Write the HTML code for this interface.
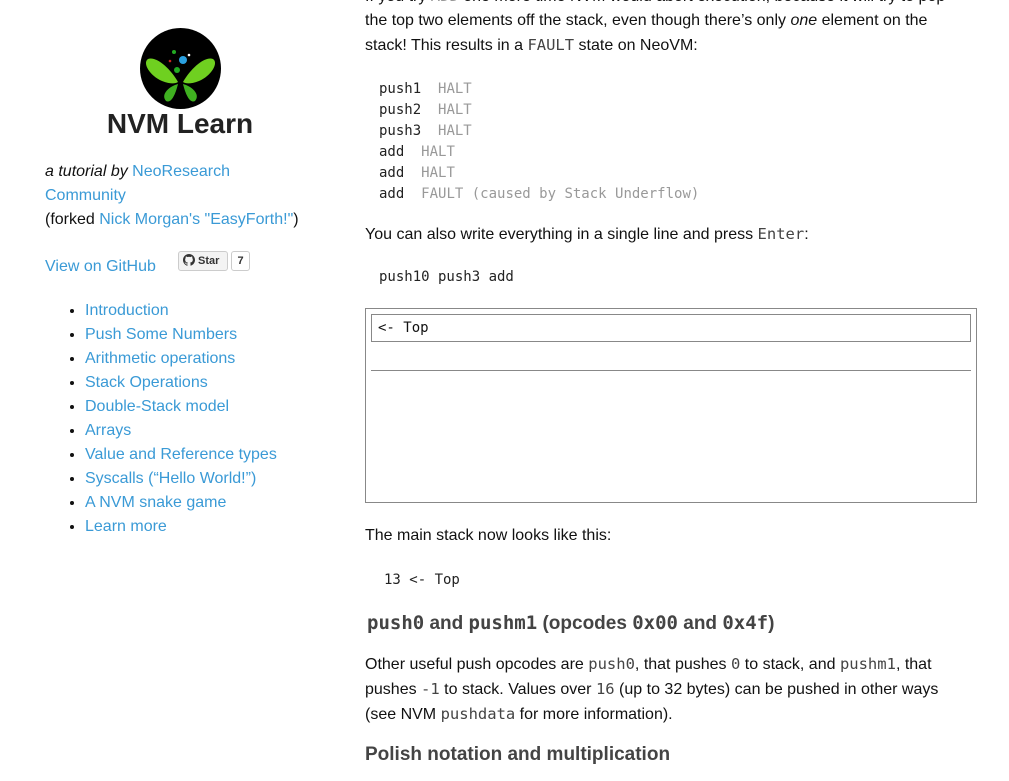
<!DOCTYPE html>
<html><head><meta charset="utf-8"><style>
body{margin:0;width:1009px;height:781px;overflow:hidden;background:#fff;font-family:"Liberation Sans",sans-serif;font-size:16px;color:#111;position:relative}
a{color:#3a9ad6;text-decoration:none}
.abs{position:absolute}
code,.m{font-family:"DejaVu Sans Mono","Liberation Mono",monospace;font-size:14px;color:#333}
p code{font-size:15.5px;color:#444}
p{margin:0;line-height:24px}
.g{color:#999}
ul{margin:0;padding-left:40px;line-height:24px}
h3{margin:0;font-size:19px;color:#444}
</style></head><body>
<div class="abs" style="left:140px;top:28px;width:81px;height:81px">
<svg width="81" height="81" viewBox="0 0 81 81"><circle cx="40.5" cy="40.5" r="40.5" fill="#000"/>
<path d="M38 54 C30 40 16 28 8 31 C2 35 10 48 22 53 C30 56 35 56 38 54Z" fill="#6fd020"/>
<path d="M43 54 C51 40 65 28 73 31 C79 35 71 48 59 53 C51 56 46 56 43 54Z" fill="#6fd020"/>
<path d="M38 56 C30 58 20 66 26 73 C32 76 36 64 38 56Z" fill="#3fb020"/>
<path d="M43 56 C51 58 61 66 55 73 C49 76 45 64 43 56Z" fill="#3fb020"/>
<circle cx="43" cy="32" r="4" fill="#2aa0e0"/><circle cx="34" cy="24" r="2" fill="#2a2"/><circle cx="30" cy="33" r="1.3" fill="#c22"/><circle cx="49" cy="27" r="1.3" fill="#fff"/><circle cx="37" cy="42" r="3" fill="#2a2"/></svg></div>
<div class="abs" style="left:0;width:360px;top:108px;text-align:center;font-weight:bold;font-size:28px;color:#222">NVM Learn</div>
<div class="abs" style="left:45px;top:160px;width:270px;line-height:24px"><i>a tutorial by</i> <a>NeoResearch Community</a><br>(forked <a>Nick Morgan's "EasyForth!"</a>)</div>
<div class="abs" style="left:45px;top:255px;line-height:24px"><a>View on GitHub</a></div>
<div class="abs" style="left:178px;top:251px;height:20px;border:1px solid #ccc;border-radius:3px;background:#f3f3f3;font-size:11px;font-weight:bold;color:#333;line-height:18px;padding:0 5px 0 4px;box-sizing:border-box;width:50px"><svg width="12" height="12" viewBox="0 0 16 16" style="vertical-align:-2px"><path fill="#333" d="M8 0C3.6 0 0 3.6 0 8c0 3.5 2.3 6.5 5.5 7.6.4.1.5-.2.5-.4v-1.4c-2.2.5-2.7-1-2.7-1-.4-.9-.9-1.2-.9-1.2-.7-.5.1-.5.1-.5.8.1 1.2.8 1.2.8.7 1.2 1.9.9 2.3.7.1-.5.3-.9.5-1.1-1.8-.2-3.6-.9-3.6-4 0-.9.3-1.6.8-2.1-.1-.2-.4-1 .1-2.1 0 0 .7-.2 2.2.8.6-.2 1.3-.3 2-.3s1.4.1 2 .3c1.5-1 2.2-.8 2.2-.8.4 1.1.2 1.9.1 2.1.5.6.8 1.3.8 2.1 0 3.1-1.9 3.7-3.6 3.9.3.3.5.8.5 1.5v2.2c0 .2.1.5.6.4C13.7 14.5 16 11.5 16 8c0-4.4-3.6-8-8-8z"/></svg> Star</div>
<div class="abs" style="left:231px;top:251px;height:20px;width:19px;border:1px solid #ccc;border-radius:3px;box-sizing:border-box;font-size:11px;font-weight:bold;color:#333;line-height:18px;text-align:center">7</div>
<ul class="abs" style="left:45px;top:299px;padding-left:40px">
<li><a>Introduction</a></li><li><a>Push Some Numbers</a></li><li><a>Arithmetic operations</a></li><li><a>Stack Operations</a></li><li><a>Double-Stack model</a></li><li><a>Arrays</a></li><li><a>Value and Reference types</a></li><li><a>Syscalls (“Hello World!”)</a></li><li><a>A NVM snake game</a></li><li><a>Learn more</a></li></ul>
<div class="abs" style="left:365px;top:-16px;width:590px">
<p>If you try <code class="g">ADD</code> one more time NVM would abort execution, because it will try to pop the top two elements off the stack, even though there’s only <i>one</i> element on the stack! This results in a <code>FAULT</code> state on NeoVM:</p></div>
<div class="abs m" style="left:379px;top:79px;line-height:21px;color:#222">push1 &nbsp;<span class="g">HALT</span><br>push2 &nbsp;<span class="g">HALT</span><br>push3 &nbsp;<span class="g">HALT</span><br>add &nbsp;<span class="g">HALT</span><br>add &nbsp;<span class="g">HALT</span><br>add &nbsp;<span class="g">FAULT (caused by Stack Underflow)</span></div>
<div class="abs" style="left:365px;top:222px"><p>You can also write everything in a single line and press <code>Enter</code>:</p></div>
<div class="abs m" style="left:379px;top:269px;color:#222">push10 push3 add</div>
<div class="abs" style="left:365px;top:308px;width:610px;height:193px;border:1px solid #888"></div>
<div class="abs m" style="left:371px;top:314px;height:26px;border:1px solid #888;line-height:27px;color:#111;padding-left:6px;width:592px">&lt;- Top</div>
<div class="abs" style="left:371px;top:370px;width:600px;height:1px;background:#888"></div>
<div class="abs" style="left:365px;top:524px"><p>The main stack now looks like this:</p></div>
<div class="abs m" style="left:384px;top:572px;color:#222">13 &lt;- Top</div>
<h3 class="abs" style="left:367px;top:612px"><code style="font-size:19px;color:#444">push0</code> and <code style="font-size:19px;color:#444">pushm1</code> (opcodes <code style="font-size:19px;color:#444">0x00</code> and <code style="font-size:19px;color:#444">0x4f</code>)</h3>
<div class="abs" style="left:365px;top:652px;width:600px"><p>Other useful push opcodes are <code>push0</code>, that pushes <code>0</code> to stack, and <code>pushm1</code>, that pushes <code>-1</code> to stack. Values over <code>16</code> (up to 32 bytes) can be pushed in other ways (see NVM <code>pushdata</code> for more information).</p></div>
<h3 class="abs" style="left:365px;top:744px">Polish notation and multiplication</h3>
</body></html>
